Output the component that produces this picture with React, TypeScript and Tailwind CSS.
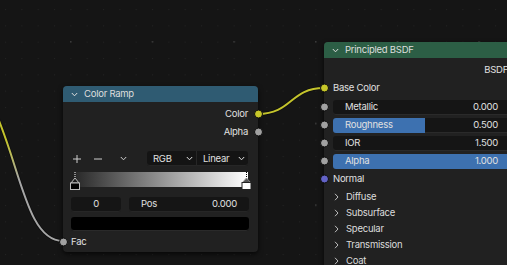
import React from "react";

const font = "font-['Inter','DejaVu_Sans',sans-serif]";

function ChevDown({ className = "" }: { className?: string }) {
  return (
    <svg width="7" height="5" viewBox="0 0 7 5" className={className}>
      <path d="M0.8 1 L3.5 3.8 L6.2 1" fill="none" stroke="currentColor" strokeWidth="1" />
    </svg>
  );
}

function ChevRight() {
  return (
    <svg width="5" height="8" viewBox="0 0 5 8" className="text-[#bdbdbd]">
      <path d="M1 0.8 L4 4 L1 7.2" fill="none" stroke="currentColor" strokeWidth="1" />
    </svg>
  );
}

function Socket({ color, side }: { color: string; side: "left" | "right" }) {
  return (
    <span
      className={`absolute top-1/2 -translate-y-1/2 w-[9px] h-[9px] rounded-full border border-[#0d0d0d] ${color} ${
        side === "left" ? "left-[-4.5px]" : "right-[-4.5px]"
      }`}
    />
  );
}

function Field({
  label,
  value,
  fill,
}: {
  label: string;
  value: string;
  fill: number;
}) {
  return (
    <div className="relative h-[18px] flex items-center">
      <Socket color="bg-[#a1a1a1]" side="left" />
      <div className="relative ml-[9px] flex-1 h-[15px] rounded-[3px] bg-[#151515] overflow-hidden flex items-center justify-between pl-[12px] pr-[18px] shadow-[inset_0_-1px_0_#2a2a2a]">
        <div
          className="absolute left-0 top-0 bottom-0 bg-[#3d71b0]"
          style={{ width: `${fill * 100}%` }}
        />
        <span className="relative text-[#e0e0e0]">{label}</span>
        <span className="relative text-[#e0e0e0]">{value}</span>
      </div>
    </div>
  );
}

function Panel({ label }: { label: string }) {
  return (
    <div className="h-[16px] flex items-center pl-[10px] gap-[7px] text-[#dcdcdc]">
      <ChevRight />
      <span>{label}</span>
    </div>
  );
}

export default function App() {
  return (
    <div
      className={`relative w-[507px] h-[265px] overflow-hidden bg-[#151515] text-[9.5px] tracking-[-0.25px] leading-none ${font}`}
    >
      {/* grid + wires */}
      <svg className="absolute inset-0" width="507" height="265">
        <defs>
          <pattern id="minor" patternUnits="userSpaceOnUse" x="5" y="9" width="16.333" height="16.333">
            <rect x="0" y="0" width="1" height="1" fill="#232323" />
          </pattern>
          <pattern id="major" patternUnits="userSpaceOnUse" x="70" y="41" width="81.67" height="81.67">
            <rect x="0" y="0" width="1.5" height="1.5" fill="#3a3a3a" />
          </pattern>
          <linearGradient id="wireg" gradientUnits="userSpaceOnUse" x1="0" y1="140" x2="0" y2="180">
            <stop offset="0" stopColor="#c4c42c" />
            <stop offset="1" stopColor="#a6a6a6" />
          </linearGradient>
        </defs>
        <rect width="507" height="265" fill="url(#minor)" />
        <rect width="507" height="265" fill="url(#major)" />
        <path d="M -10 100 C 20 160, 25 241, 63 241" fill="none" stroke="#0e0e0e" strokeWidth="3.5" />
        <path d="M -10 100 C 20 160, 25 241, 63 241" fill="none" stroke="url(#wireg)" strokeWidth="2" />
        <path d="M 258 114 C 292 114, 290 88, 324 88" fill="none" stroke="#0e0e0e" strokeWidth="3.5" />
        <path d="M 258 114 C 292 114, 290 88, 324 88" fill="none" stroke="#c4c42c" strokeWidth="2" />
      </svg>

      {/* Color Ramp node */}
      <div className="absolute left-[63px] top-[86px] w-[195px] h-[166px] rounded-[4px] bg-[#212121] shadow-[0_2px_5px_rgba(0,0,0,0.7)] flex flex-col">
        <div className="h-[16px] rounded-t-[4px] bg-[#2f5b72] flex items-center pl-[8px] gap-[6px] text-[#dedede]">
          <ChevDown />
          <span>Color Ramp</span>
        </div>
        <div className="pt-[3px] flex flex-col">
          <div className="relative h-[18px] flex items-center justify-end pr-[10px] text-[#e0e0e0]">
            <span>Color</span>
            <Socket color="bg-[#c7c729]" side="right" />
          </div>
          <div className="relative h-[18px] flex items-center justify-end pr-[10px] text-[#e0e0e0]">
            <span>Alpha</span>
            <Socket color="bg-[#a1a1a1]" side="right" />
          </div>

          <div className="mt-[10px] h-[15px] flex items-center pl-[10px] text-[#cfcfcf]">
            <svg width="8" height="8" viewBox="0 0 8 8">
              <path d="M4 0 V8 M0 4 H8" stroke="currentColor" strokeWidth="1" />
            </svg>
            <svg width="8" height="8" viewBox="0 0 8 8" className="ml-[13px]">
              <path d="M0 4 H8" stroke="currentColor" strokeWidth="1" />
            </svg>
            <span className="ml-[17px] w-[8px] flex justify-center">
              <ChevDown />
            </span>
            <div className="ml-[20px] flex h-[15px] rounded-[3px] bg-[#141414] shadow-[inset_0_-1px_0_#262626]">
              <div className="w-[50px] flex items-center justify-between pl-[6px] pr-[3px] border-r border-[#262626] text-[#e0e0e0]">
                <span>RGB</span>
                <ChevDown />
              </div>
              <div className="w-[51px] flex items-center justify-between pl-[6px] pr-[3px] text-[#e0e0e0]">
                <span>Linear</span>
                <ChevDown />
              </div>
            </div>
          </div>

          <div className="relative mt-[6px] ml-[13px] mr-[10px] h-[14.5px] bg-[linear-gradient(to_right,#2a2a2a,#fff)]">
            <svg className="absolute left-[-6px] top-0" width="11" height="18" viewBox="0 0 11 18">
              <path d="M5 0 V6" stroke="#ffffff" strokeWidth="1" strokeDasharray="1 1" />
              <path d="M5 6 L1 11 H9 Z" fill="#1a1a1a" stroke="#bbbbbb" strokeWidth="1" />
              <rect x="0.5" y="11" width="9" height="6.5" fill="#000" stroke="#bbbbbb" strokeWidth="1" />
            </svg>
            <svg className="absolute right-[-4px] top-0" width="11" height="18" viewBox="0 0 11 18">
              <path d="M5.5 0 V6" stroke="#000" strokeWidth="1" strokeDasharray="1 1" />
              <path d="M5.5 6 L1.5 10.5 H9.5 Z" fill="#555" stroke="#888" strokeWidth="1" />
              <rect x="1" y="10.5" width="9" height="7" fill="#fff" stroke="#222" strokeWidth="1" />
            </svg>
          </div>

          <div className="mt-[10px] pl-[8px] pr-[9px] flex gap-[8px] text-[#e0e0e0]">
            <div className="w-[50px] h-[15px] rounded-[3px] bg-[#151515] shadow-[inset_0_-1px_0_#262626] flex items-center justify-center">
              0
            </div>
            <div className="flex-1 h-[15px] rounded-[3px] bg-[#151515] shadow-[inset_0_-1px_0_#262626] flex items-center justify-between pl-[12px] pr-[12px]">
              <span>Pos</span>
              <span>0.000</span>
            </div>
          </div>

          <div className="mt-[5px] ml-[8px] mr-[9px] h-[14.5px] rounded-[3px] bg-black shadow-[inset_0_-1px_0_#2a2a2a]" />

          <div className="relative mt-[2px] h-[18px] flex items-center pl-[8px] text-[#e0e0e0]">
            <Socket color="bg-[#a1a1a1]" side="left" />
            <span>Fac</span>
          </div>
        </div>
      </div>

      {/* Principled BSDF node */}
      <div className="absolute left-[324px] top-[42px] w-[192px] h-[240px] rounded-[4px] bg-[#212121] shadow-[0_2px_5px_rgba(0,0,0,0.7)] flex flex-col">
        <div className="h-[16px] rounded-t-[4px] bg-[#2c5e45] flex items-center pl-[8px] gap-[6px] text-[#dedede]">
          <ChevDown />
          <span>Principled BSDF</span>
        </div>
        <div className="pt-[3px] flex flex-col text-[#e0e0e0]">
          <div className="relative h-[18px] flex items-center justify-end pr-[8px]">
            <span>BSDF</span>
          </div>
          <div className="relative h-[18px] flex items-center pl-[9px]">
            <Socket color="bg-[#c7c729]" side="left" />
            <span>Base Color</span>
          </div>
          <div className="mt-[1px]">
            <Field label="Metallic" value="0.000" fill={0} />
            <Field label="Roughness" value="0.500" fill={0.5} />
            <Field label="IOR" value="1.500" fill={0} />
            <Field label="Alpha" value="1.000" fill={1} />
          </div>
          <div className="relative h-[18px] flex items-center pl-[9px]">
            <Socket color="bg-[#6363c7]" side="left" />
            <span>Normal</span>
          </div>
          <div className="mt-[1px]">
            <Panel label="Diffuse" />
            <Panel label="Subsurface" />
            <Panel label="Specular" />
            <Panel label="Transmission" />
            <Panel label="Coat" />
          </div>
        </div>
      </div>
    </div>
  );
}
